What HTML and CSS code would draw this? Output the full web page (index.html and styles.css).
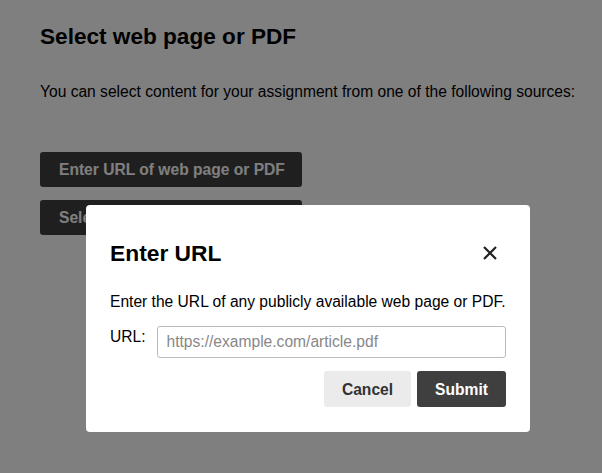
FILE: index.html
```html
<!DOCTYPE html>
<html>
<head>
<meta charset="utf-8">
<link rel="stylesheet" href="styles.css">
</head>
<body>
<main class="page">
  <h1 class="title">Select web page or PDF</h1>
  <p class="intro">You can select content for your assignment from one of the following sources:</p>
  <div class="sources">
    <button class="source-btn">Enter URL of web page or PDF</button>
    <button class="source-btn">Select PDF from Google Drive</button>
  </div>
</main>
<div class="backdrop">
  <div class="modal" role="dialog">
    <div class="modal-head">
      <h2 class="modal-title">Enter URL</h2>
      <button class="close" aria-label="Close">
        <svg width="14" height="14" viewBox="0 0 14 14"><path d="M1 1 L13 13 M13 1 L1 13" stroke="#222" stroke-width="2.2" stroke-linecap="butt"/></svg>
      </button>
    </div>
    <p class="modal-text">Enter the URL of any publicly available web page or PDF.</p>
    <div class="field">
      <label class="label" for="url">URL:</label>
      <input id="url" class="input" type="text" placeholder="https://example.com/article.pdf">
    </div>
    <div class="actions">
      <button class="btn btn-cancel">Cancel</button>
      <button class="btn btn-submit">Submit</button>
    </div>
  </div>
</div>
</body>
</html>
```
FILE: styles.css
```css
html, body {
  margin: 0;
  padding: 0;
  background: #fff;
  font-family: "Liberation Sans", Arial, sans-serif;
  color: #000;
}
.page {
  padding: 23px 0 23px 40px;
}
.title {
  font-size: 22.6px;
  font-weight: bold;
  margin: 0;
  line-height: 28px;
}
.intro {
  font-size: 15.6px;
  margin: 31px 0 0;
  line-height: 20px;
  white-space: nowrap;
}
.sources {
  margin-top: 50px;
  display: flex;
  flex-direction: column;
  align-items: flex-start;
  gap: 13px;
}
.source-btn {
  font-family: inherit;
  font-size: 15.6px;
  font-weight: bold;
  background: #3f3f3f;
  color: #fff;
  border: 0;
  border-radius: 3px;
  height: 35px;
  width: 262px;
  padding: 0 19px;
  text-align: left;
  white-space: nowrap;
}
.backdrop {
  position: fixed;
  inset: 0;
  background: rgba(0,0,0,0.5);
  padding: 205px 0 0 86px;
}
.modal {
  width: 444px;
  height: 227px;
  box-sizing: border-box;
  background: #fff;
  border-radius: 4px;
  padding: 30px 24px 0 24px;
}
.modal-head {
  display: flex;
  justify-content: space-between;
  align-items: center;
}
.modal-title {
  margin: 0;
  font-size: 22.8px;
  font-weight: bold;
  line-height: 36px;
}
.close {
  background: none;
  border: 0;
  padding: 0;
  width: 24px;
  height: 24px;
  display: flex;
  align-items: center;
  justify-content: center;
  margin-right: 4px;
}
.modal-text {
  font-size: 15.6px;
  line-height: 20px;
  margin: 21px 0 0;
  white-space: nowrap;
}
.field {
  display: flex;
  align-items: flex-start;
  gap: 11px;
  margin-top: 14px;
}
.label {
  font-size: 15.6px;
  line-height: 20px;
  margin-top: 1px;
}
.input {
  flex: 1;
  height: 32px;
  box-sizing: border-box;
  border: 1px solid #bbb;
  border-radius: 3px;
  font-family: inherit;
  font-size: 15.6px;
  padding: 0 9px;
  margin: 0;
}
.input::placeholder { color: #888; }
.actions {
  display: flex;
  justify-content: flex-end;
  gap: 6px;
  margin-top: 13px;
}
.btn {
  font-family: inherit;
  font-size: 15.6px;
  font-weight: bold;
  border: 0;
  border-radius: 3px;
  height: 36px;
  padding: 1px 0 0;
}
.btn-cancel { background: #ebebeb; color: #333; width: 87px; }
.btn-submit { background: #3f3f3f; color: #fff; width: 89px; }
```
